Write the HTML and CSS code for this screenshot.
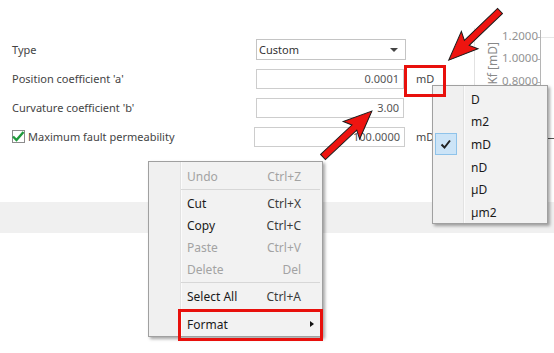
FILE: index.html
```html
<!DOCTYPE html>
<html lang="en">
<head>
  <meta charset="UTF-8" />
  <title>Fault permeability</title>
  <link rel="stylesheet" href="styles.css">
</head>
<body>
  <div class="page">
    <div class="form">
      <div class="row">
        <span class="label">Type</span>
        <div class="select">Custom<span class="caret"></span></div>
      </div>
      <div class="row">
        <span class="label">Position coefficient 'a'</span>
        <div class="field">0.0001</div>
        <span class="unit">mD</span>
      </div>
      <div class="row">
        <span class="label">Curvature coefficient 'b'</span>
        <div class="field">3.00</div>
      </div>
      <div class="row">
        <span class="label check-label">
          <span class="check">
            <svg width="15" height="13" viewBox="0 0 15 13"><path d="M2 6.5 L5.5 10 L12.5 2" fill="none" stroke="#1f9a3c" stroke-width="2.4"/></svg>
          </span>
          Maximum fault permeability
        </span>
        <div class="field wide">100.0000</div>
        <span class="unit">mD</span>
      </div>
    </div>

    <div class="band"></div>

    <!-- chart behind the menus -->
    <div class="chart">
      <span class="chart-title">Kf [mD]</span>
      <span class="tick-label t1">1.2000</span>
      <span class="tick-label t2">1.0000</span>
      <span class="tick-label t3">0.8000</span>
      <span class="axis"></span>
      <span class="grid-line"></span>
      <span class="tick-mark m1"></span>
      <span class="tick-mark m2"></span>
      <span class="tick-mark m3"></span>
      <span class="dark-line"></span>
    </div>

    <div class="ctx-menu">
      <div class="item disabled"><span>Undo</span><span>Ctrl+Z</span></div>
      <div class="sep"></div>
      <div class="item"><span>Cut</span><span class="key">Ctrl+X</span></div>
      <div class="item"><span>Copy</span><span class="key">Ctrl+C</span></div>
      <div class="item disabled"><span>Paste</span><span>Ctrl+V</span></div>
      <div class="item disabled"><span>Delete</span><span>Del</span></div>
      <div class="sep"></div>
      <div class="item"><span>Select All</span><span class="key">Ctrl+A</span></div>
      <div class="item submenu"><span>Format</span><span class="sub-arrow"></span></div>
    </div>

    <div class="unit-menu">
      <div class="unit-item"><span class="tick-box"></span>D</div>
      <div class="unit-item"><span class="tick-box"></span>m2</div>
      <div class="unit-item"><span class="tick-box on">
        <svg width="20" height="20" viewBox="0 0 20 20"><path d="M5.5 10.5 L8.5 13.5 L14 6.5" fill="none" stroke="#222" stroke-width="2"/></svg>
      </span>mD</div>
      <div class="unit-item"><span class="tick-box"></span>nD</div>
      <div class="unit-item"><span class="tick-box"></span>µD</div>
      <div class="unit-item"><span class="tick-box"></span>µm2</div>
    </div>

    <div class="callout box-unit"></div>
    <div class="callout box-format"></div>

    <svg class="arrows" width="554" height="353" viewBox="0 0 554 353">
      <polygon transform="translate(500 11) rotate(136.2)" points="0,-3.5 46,-3.5 42,-12 71,0 42,12 46,3.5 0,3.5" />
      <polygon transform="translate(323 157) rotate(-43.2)" points="0,-3.5 43,-3.5 39,-12 67,0 39,12 43,3.5 0,3.5" />
    </svg>
  </div>
</body>
</html>
```

FILE: styles.css
```css
body {
  margin: 0;
  background: #fff;
  font-family: "Noto Sans", "Open Sans", sans-serif;
}

.page {
  position: relative;
  width: 554px;
  height: 353px;
  overflow: hidden;
}

/* form rows */
.form {
  padding: 35px 0 0 12px;
  display: grid;
  grid-auto-rows: 29px;
}

.row {
  display: grid;
  grid-template-columns: 244px 150px auto;
  align-items: center;
}

.label {
  font-size: 11px;
  color: #444;
}

.check-label {
  display: flex;
  align-items: center;
  gap: 3px;
}

.check {
  width: 13px;
  height: 13px;
  box-sizing: border-box;
  border: 1px solid #8c8c8c;
  display: flex;
  align-items: center;
  justify-content: center;
  overflow: visible;
}

.check svg {
  flex-shrink: 0;
}

.select {
  height: 21px;
  box-sizing: border-box;
  border: 1px solid #c4c4c4;
  display: flex;
  align-items: center;
  justify-content: space-between;
  padding: 0 7px 0 2px;
  font-size: 11px;
  color: #333;
}

.caret {
  width: 0;
  height: 0;
  border-left: 4px solid transparent;
  border-right: 4px solid transparent;
  border-top: 4px solid #444;
}

.field {
  width: 148px;
  height: 20px;
  box-sizing: border-box;
  border: 1px solid #cdcdcd;
  padding-right: 4px;
  text-align: right;
  line-height: 18px;
  font-size: 11px;
  color: #555;
}

.field.wide {
  width: 151px;
  margin-left: -2px;
}

.unit {
  padding-left: 10px;
  font-size: 11px;
  color: #444;
}

.band {
  margin-top: 51px;
  height: 31px;
  background: #f0f0f0;
}

/* chart at the right edge */
.chart {
  position: absolute;
  left: 474px;
  top: 28px;
  width: 80px;
  height: 174px;
  border-left: 1px solid #e2e2e2;
  color: #8a8a8a;
}

.chart-title {
  position: absolute;
  left: 10px;
  top: 14px;
  writing-mode: vertical-rl;
  transform: rotate(180deg);
  font-size: 12px;
  line-height: 16px;
  color: #888;
}

.tick-label {
  position: absolute;
  right: 17px;
  font-size: 11.5px;
  line-height: 16px;
  color: #939393;
}

.t1 { top: 0; }
.t2 { top: 22px; }
.t3 { top: 45px; }

.axis {
  position: absolute;
  left: 65px;
  top: 2px;
  bottom: 0;
  width: 1px;
  background: #b5b5b5;
}

.grid-line {
  position: absolute;
  left: 66px;
  right: 0;
  top: 9px;
  height: 1px;
  background: #e6e6e6;
}

.tick-mark {
  position: absolute;
  left: 62px;
  width: 3px;
  height: 1px;
  background: #b5b5b5;
}

.m1 { top: 9px; }
.m2 { top: 31px; }
.m3 { top: 54px; }

.dark-line {
  position: absolute;
  left: 72px;
  right: 0;
  top: 110px;
  height: 1px;
  background: #555;
}

/* context menu */
.ctx-menu {
  position: absolute;
  left: 148px;
  top: 161px;
  width: 175px;
  height: 176px;
  box-sizing: border-box;
  border: 1px solid #a0a0a0;
  padding: 3px 0 1px 0;
  background: linear-gradient(to right, #f0f0f0 0 31px, #e2e2e2 31px 32px, #fbfbfb 32px 33px, #f2f2f2 33px);
  box-shadow: 2px 2px 3px rgba(0, 0, 0, 0.35);
}

.item {
  height: 22px;
  display: flex;
  align-items: center;
  justify-content: space-between;
  padding: 0 21px 0 38px;
  font-size: 12px;
  color: #1a1a1a;
}

.item .key {
  color: #3c3c3c;
}

.item.disabled {
  color: #a3a3a3;
}

.item.submenu {
  margin-top: 6px;
  padding-right: 8px;
}

.sub-arrow {
  width: 0;
  height: 0;
  border-top: 3.5px solid transparent;
  border-bottom: 3.5px solid transparent;
  border-left: 4px solid #111;
}

.sep {
  height: 1px;
  margin: 2px 2px 2px 32px;
  background: #d7d7d7;
}

/* unit dropdown */
.unit-menu {
  position: absolute;
  left: 432px;
  top: 85px;
  width: 116px;
  height: 139px;
  box-sizing: border-box;
  border: 1px solid #a0a0a0;
  padding-top: 2px;
  background: linear-gradient(to right, #f0f0f0 0 30px, #e2e2e2 30px 31px, #fbfbfb 31px 32px, #f2f2f2 32px);
  box-shadow: 2px 2px 3px rgba(0, 0, 0, 0.35);
}

.unit-item {
  height: 22.6px;
  display: flex;
  align-items: center;
  padding-left: 2px;
  font-size: 12px;
  color: #1a1a1a;
}

.tick-box {
  width: 22px;
  height: 22px;
  box-sizing: border-box;
  margin-right: 14px;
  display: flex;
  align-items: center;
  justify-content: center;
}

.tick-box.on {
  background: #cce4f7;
  border: 1px solid #8fc3ea;
}

/* red annotations */
.callout {
  position: absolute;
  box-sizing: border-box;
  border: 3px solid #e8100c;
}

.box-unit {
  left: 404px;
  top: 65px;
  width: 42px;
  height: 32px;
}

.box-format {
  left: 178px;
  top: 309px;
  width: 145px;
  height: 32px;
}

.arrows {
  position: absolute;
  left: 0;
  top: 0;
  pointer-events: none;
}

.arrows polygon {
  fill: #ee1410;
  stroke: #1a1a1a;
  stroke-width: 1;
  stroke-linejoin: miter;
}
```
